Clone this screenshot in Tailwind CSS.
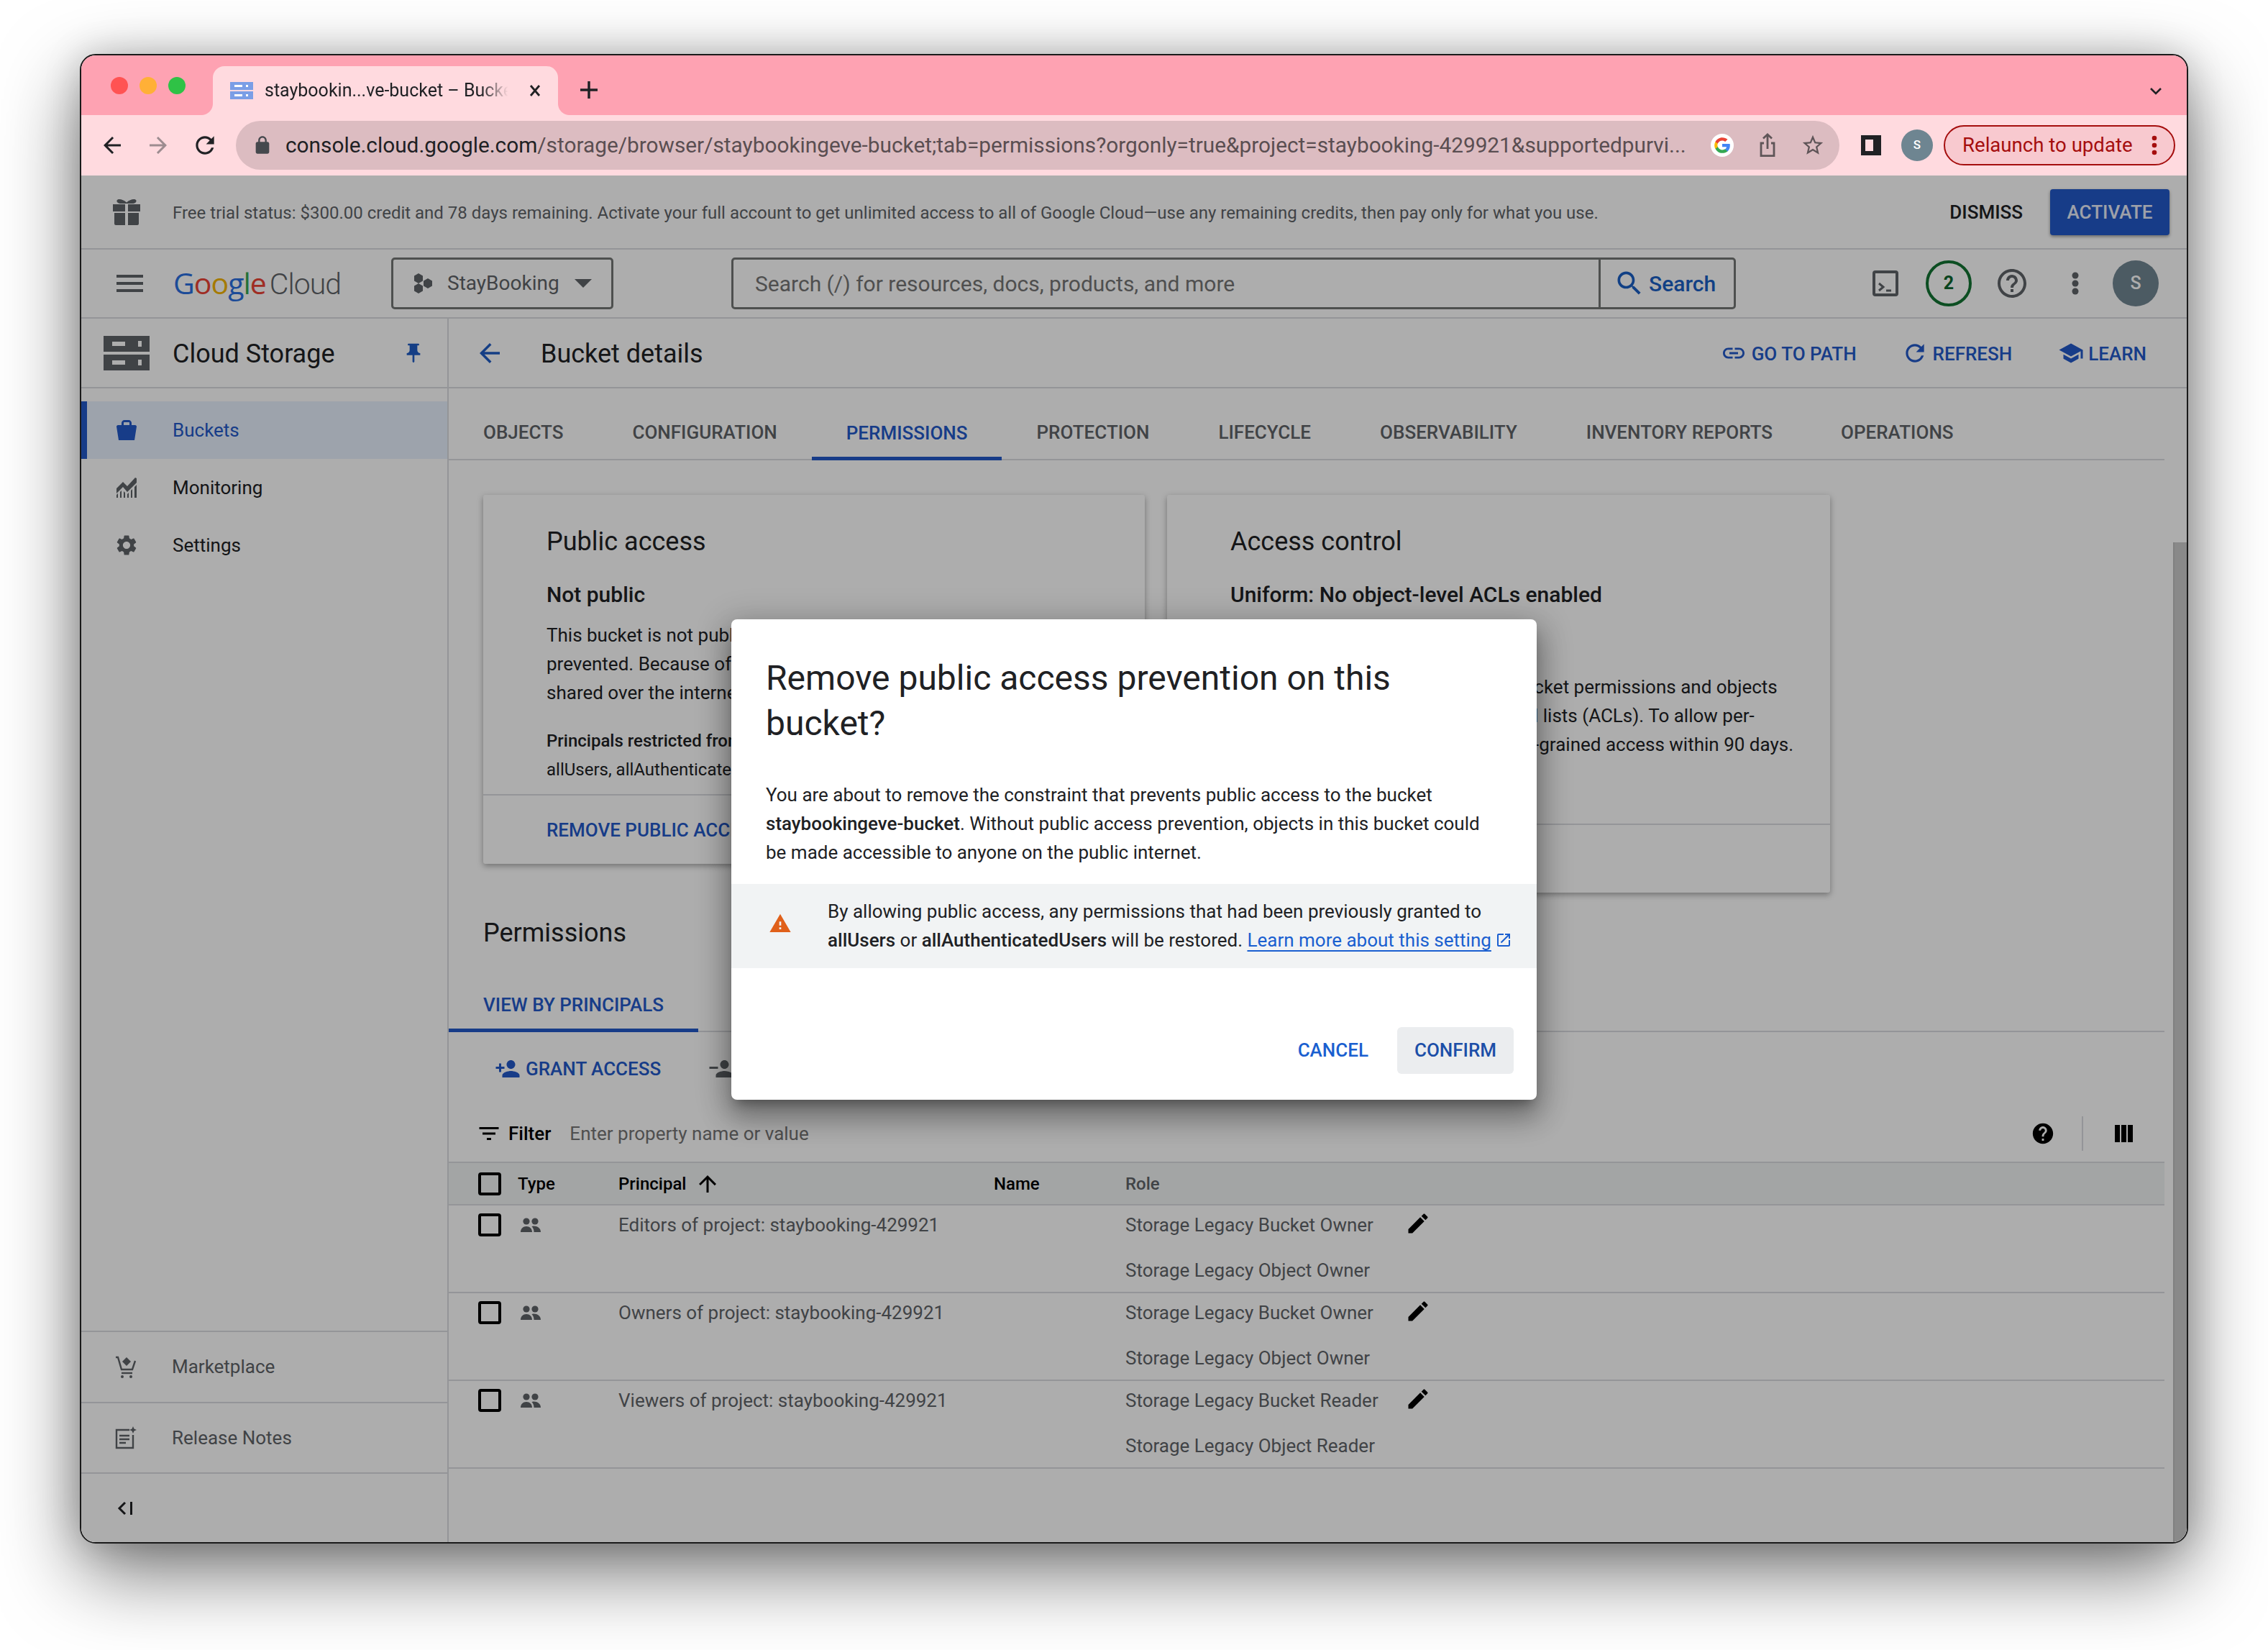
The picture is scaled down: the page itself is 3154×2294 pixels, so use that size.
<!doctype html>
<html lang="en">
<head>
<meta charset="UTF-8" />
<title>Bucket details</title>
<script src="https://cdn.jsdelivr.net/npm/@tailwindcss/browser@4"></script>
</head>
<body class="bg-white h-[2294px] w-[3154px] overflow-hidden pt-[75px] pl-[111px] font-['Roboto',sans-serif]">

<svg class="hidden">
  <symbol id="people" viewBox="0 0 28 20"><circle cx="8" cy="5" r="4.6"/><circle cx="20" cy="5" r="4.6"/><path d="M0 20c0-5 3.500-8 8-8s8 3 8 8zM18 11.500c5.500 0 10 3 10 8.500h-9.500c0-3-1-6-3-7.800.7-.4 1.500-.7 2.500-.7z"/></symbol>
  <symbol id="edit" viewBox="0 0 24 24"><path d="M3 17.25V21h3.75L17.81 9.94l-3.75-3.75L3 17.25zM20.71 7.04c.39-.39.39-1.02 0-1.41l-2.34-2.34c-.39-.39-1.02-.39-1.41 0l-1.83 1.83 3.75 3.75 1.83-1.83z"/></symbol>
</svg>

<!-- browser window -->
<div class="relative w-[2932px] h-[2071px] box-border border-2 border-[#1a1a1a] rounded-[22px] overflow-hidden bg-white flex flex-col shadow-[0_40px_110px_rgba(0,0,0,0.55),0_0_50px_rgba(0,0,0,0.18)]">

  <!-- tab strip -->
  <div class="h-[83px] shrink-0 bg-[#fea2b2] flex items-end">
    <div class="flex gap-4 ml-[41px] mb-[29px]">
      <div class="w-6 h-6 rounded-full bg-[#ff5353]"></div>
      <div class="w-6 h-6 rounded-full bg-[#ffb037]"></div>
      <div class="w-6 h-6 rounded-full bg-[#2fc246]"></div>
    </div>
    <div class="relative ml-[38px] w-[480px] h-[68px] bg-[#ffdadf] rounded-t-[16px] flex items-center pl-6">
      <div class="absolute -left-4 bottom-0 w-4 h-4 bg-[radial-gradient(circle_at_0_0,#fea2b2_15.5px,#ffdadf_16.5px)]"></div>
      <div class="absolute -right-4 bottom-0 w-4 h-4 bg-[radial-gradient(circle_at_100%_0,#fea2b2_15.5px,#ffdadf_16.5px)]"></div>
      <svg class="w-8 h-6 shrink-0" viewBox="0 0 32 24"><path fill="#7b9ee6" d="M0 0h32v11H0zM0 13h32v11H0z"/><path fill="#fff" d="M6 4h11v3H6zM22 4h3v3h-3zM6 17h11v3H6zM22 17h3v3h-3z"/></svg>
      <span class="ml-4 w-[342px] whitespace-nowrap overflow-hidden text-[25px] text-[#202124] [mask-image:linear-gradient(90deg,#000_88%,transparent_99%)]">staybookin...ve-bucket – Bucket details</span>
      <svg class="w-[24px] h-[24px] ml-[22px] shrink-0" viewBox="0 0 24 24" fill="none" stroke="#202124" stroke-width="2.8"><path d="M6 5l12 14M18 5L6 19"/></svg>
    </div>
    <svg class="w-8 h-8 ml-[27px] mb-[19px]" viewBox="0 0 24 24" fill="none" stroke="#202124" stroke-width="2.6"><path d="M12 3v18M3 12h18"/></svg>
    <svg class="w-6 h-6 ml-auto mr-[31px] mb-[22px]" viewBox="0 0 24 24" fill="none" stroke="#202124" stroke-width="2.6"><path d="M5 9l7 7 7-7"/></svg>
  </div>

  <!-- toolbar -->
  <div class="h-[84px] shrink-0 bg-[#ffdadf] flex items-center">
    <svg class="w-[36px] h-[36px] ml-[25px]" viewBox="0 0 24 24" fill="#202124"><path d="M20 11H7.83l5.59-5.59L12 4l-8 8 8 8 1.41-1.41L7.83 13H20v-2z"/></svg>
    <svg class="w-[36px] h-[36px] ml-[28px]" viewBox="0 0 24 24" fill="#9d8c90"><path d="M12 4l-1.41 1.41L16.17 11H4v2h12.17l-5.58 5.59L12 20l8-8z"/></svg>
    <svg class="w-[38px] h-[38px] ml-[28px]" viewBox="0 0 24 24" fill="#202124"><path d="M17.65 6.35C16.2 4.9 14.21 4 12 4c-4.42 0-7.99 3.58-7.99 8s3.57 8 7.99 8c3.73 0 6.84-2.55 7.73-6h-2.08c-.82 2.33-3.04 4-5.65 4-3.31 0-6-2.69-6-6s2.69-6 6-6c1.66 0 3.14.69 4.22 1.78L13 11h7V4l-2.35 2.35z"/></svg>
    <div class="ml-6 w-[2230px] h-[68px] rounded-full bg-[#dcbcc1] flex items-center shrink-0">
      <svg class="w-[28px] h-[28px] ml-[23px]" viewBox="0 0 24 24" fill="#45484d"><path d="M18 8h-1V6c0-2.76-2.24-5-5-5S7 3.24 7 6v2H6c-1.1 0-2 .9-2 2v10c0 1.1.9 2 2 2h12c1.1 0 2-.9 2-2V10c0-1.1-.9-2-2-2zM9 6c0-1.66 1.34-3 3-3s3 1.34 3 3v2H9V6z"/></svg>
      <span class="ml-[18px] w-[1960px] shrink-0 text-[29.8px] whitespace-nowrap overflow-hidden text-[#5a4e51]"><span class="text-[#202124]">console.cloud.google.com</span>/storage/browser/staybookingeve-bucket;tab=permissions?orgonly=true&amp;project=staybooking-429921&amp;supportedpurvi...</span>
      <div class="ml-[22px] w-8 h-8 rounded-full bg-white flex items-center justify-center shrink-0">
        <svg class="w-[26px] h-[26px]" viewBox="0 0 24 24"><path fill="#4285f4" d="M22 12.2c0-.7-.1-1.4-.2-2H12v3.9h5.6c-.3 1.3-1 2.4-2.1 3.1v2.6h3.4c2-1.8 3.100-4.500 3.100-7.600z"/><path fill="#34a853" d="M12 22c2.800 0 5.100-.9 6.900-2.500l-3.400-2.600c-.9.600-2.100 1-3.500 1-2.700 0-5-1.800-5.800-4.300H3.200v2.700C4.900 19.700 8.200 22 12 22z"/><path fill="#fbbc05" d="M6.200 13.600c-.2-.6-.3-1.200-.3-1.800s.1-1.200.3-1.800V7.300H3.200C2.400 8.700 2 10.300 2 12s.4 3.300 1.200 4.700l3-2.700z"/><path fill="#ea4335" d="M12 5.900c1.500 0 2.900.5 3.900 1.500l3-3C17.100 2.800 14.800 2 12 2 8.200 2 4.900 4.300 3.200 7.300l3 2.700C7 7.700 9.300 5.900 12 5.900z"/></svg>
      </div>
      <svg class="w-[28px] h-[36px] ml-[33px]" viewBox="0 0 14 18" fill="none" stroke="#5f5558" stroke-width="1.4"><path d="M4.500 7.500H2.500v8.800h9V7.500h-2M7 11.500V1.500M4 4.200l3-2.800 3 2.800"/></svg>
      <svg class="w-[34px] h-[34px] ml-[32px]" viewBox="0 0 24 24" fill="#5f5558"><path d="M22 9.240l-7.190-.62L12 2 9.190 8.630 2 9.240l5.460 4.730L5.820 21 12 17.270 18.180 21l-1.630-7.030L22 9.240zM12 15.400l-3.760 2.270 1-4.280-3.320-2.880 4.380-.38L12 6.100l1.710 4.040 4.380.38-3.320 2.880 1 4.280L12 15.400z"/></svg>
    </div>
    <div class="ml-[30px] w-[28px] h-[28px] border-[6px] border-[#202124] bg-[#ffdadf] box-border flex shrink-0"><div class="ml-auto w-[5px] bg-[#202124]"></div></div>
    <div class="ml-[28px] w-[44px] h-[44px] rounded-full bg-[#6e8591] text-white text-[17px] font-medium flex items-center justify-center shrink-0">S</div>
    <div class="ml-[15px] w-[322px] h-[56px] box-border rounded-full border-[2.5px] border-[#a50e0e] bg-[#f8c9cf] flex items-center pl-6 text-[27.6px] text-[#a50e0e] shrink-0">
      Relaunch to update
      <svg class="w-[8px] h-[28px] ml-auto mr-[23px]" viewBox="0 0 8 28" fill="#a50e0e"><circle cx="4" cy="4" r="3.3"/><circle cx="4" cy="14" r="3.3"/><circle cx="4" cy="24" r="3.3"/></svg>
    </div>
  </div>

  <!-- console -->
  <div class="relative flex-1 flex flex-col min-h-0 bg-white">

    <!-- trial banner -->
    <div class="h-[103px] shrink-0 border-b-2 border-[#dadce0] flex items-center">
      <svg class="w-[38px] h-[36px] ml-[44px]" viewBox="0 0 38 36" fill="#5f6368"><path d="M9 0c3 0 7 1.500 10 4.500C22 1.500 26 0 29 0c3 0 4.500 2 3 4-1 1.500-3 2-5 2H11C9 6 7 5.500 6 4 4.500 2 6 0 9 0zM0 7h17v10H0zM21 7h17v10H21zM2 19h15v17H4c-1 0-2-1-2-2zM21 19h15v15c0 1-1 2-2 2H21z"/></svg>
      <span class="ml-[45px] pt-[3px] text-[24px] text-[#5f6368] whitespace-nowrap">Free trial status: $300.00 credit and 78 days remaining. Activate your full account to get unlimited access to all of Google Cloud—use any remaining credits, then pay only for what you use.</span>
      <span class="ml-auto pt-[2px] text-[26px] font-medium text-[#202124]">DISMISS</span>
      <div class="ml-[38px] mr-6 w-[166px] h-[64px] rounded-[4px] bg-[#2359c9] text-white/90 text-[26px] font-medium flex items-center justify-center pt-[1px] shadow-[0_2px_4px_rgba(0,0,0,0.4)]">ACTIVATE</div>
    </div>

    <!-- top bar -->
    <div class="h-[96px] shrink-0 border-b-2 border-[#dadce0] flex items-center">
      <svg class="w-[37px] h-[24px] ml-[49px]" viewBox="0 0 37 24" fill="#5f6368"><path d="M0 0h37v4H0zM0 10h37v4H0zM0 20h37v4H0z"/></svg>
      <div class="ml-[42px] w-[234px] flex items-baseline text-[41px] leading-none whitespace-nowrap tracking-[-1px] font-['Open_Sans',sans-serif]">
        <span class="text-[#2a6fe0]">G</span><span class="text-[#ea4335]">o</span><span class="text-[#f4b400]">o</span><span class="text-[#2a6fe0]">g</span><span class="text-[#34a853]">l</span><span class="text-[#ea4335]">e</span><span class="ml-[5px] text-[#5f6368] font-['Roboto',sans-serif] font-light">Cloud</span>
      </div>
      <div class="ml-[69px] w-[309px] h-[72px] box-border rounded-[5px] border-[3px] border-[#747775] flex items-center shrink-0">
        <svg class="w-[28px] h-[30px] ml-[28px]" viewBox="0 0 28 30" fill="#5f6368"><path d="M7 1l6 3.500v7L7 15l-6-3.500v-7zM7 15l6 3.500v7L7 29l-6-3.500v-7zM20 8l6 3.500v7L20 22l-6-3.500v-7z"/></svg>
        <span class="ml-[19px] text-[28px] text-[#5f6368]">StayBooking</span>
        <svg class="w-6 h-3 ml-[21px]" viewBox="0 0 24 12" fill="#5f6368"><path d="M0 0h24L12 12z"/></svg>
      </div>
      <div class="ml-[164px] w-[1397px] h-[72px] box-border rounded-[5px] border-[3px] border-[#747775] flex items-center shrink-0">
        <span class="pl-[30px] flex-1 text-[30px] text-[#757575]">Search (/) for resources, docs, products, and more</span>
        <div class="h-full w-[188px] border-l-[3px] border-[#747775] flex items-center box-border">
          <svg class="w-[44px] h-[44px] ml-[18px]" viewBox="0 0 24 24" fill="#1a5fc4"><path d="M15.500 14h-.79l-.28-.27C15.410 12.590 16 11.110 16 9.500 16 5.910 13.090 3 9.500 3S3 5.910 3 9.500 5.910 16 9.500 16c1.610 0 3.090-.59 4.230-1.570l.27.28v.79l5 4.990L20.490 19l-4.990-5zm-6 0C7.010 14 5 11.990 5 9.500S7.010 5 9.500 5 14 7.010 14 9.500 11.990 14 9.500 14z"/></svg>
          <span class="ml-[5px] text-[30px] font-medium text-[#1a5fc4]">Search</span>
        </div>
      </div>
      <svg class="w-[36px] h-[36px] ml-[190px]" viewBox="0 0 36 36" fill="none" stroke="#5f6368" stroke-width="4"><rect x="2" y="2" width="32" height="32" rx="2"/><path d="M9 18l6 5-6 5" stroke-width="3"/><path d="M19 28h7" stroke-width="3"/></svg>
      <div class="ml-[38px] w-[64px] h-[64px] box-border rounded-full border-[4px] border-[#137333] flex items-center justify-center text-[25px] font-bold text-[#0d652d]">2</div>
      <svg class="w-[48px] h-[48px] ml-[32px]" viewBox="0 0 24 24" fill="#5f6368"><path d="M11 18h2v-2h-2v2zm1-16C6.480 2 2 6.480 2 12s4.480 10 10 10 10-4.480 10-10S17.520 2 12 2zm0 18c-4.410 0-8-3.590-8-8s3.590-8 8-8 8 3.590 8 8-3.590 8-8 8zm0-14c-2.210 0-4 1.790-4 4h2c0-1.100.9-2 2-2s2 .9 2 2c0 2-3 1.750-3 5h2c0-2.250 3-2.500 3-5 0-2.210-1.790-4-4-4z"/></svg>
      <svg class="w-[10px] h-[32px] ml-[59px]" viewBox="0 0 10 32" fill="#5f6368"><circle cx="5" cy="5" r="4.5"/><circle cx="5" cy="16" r="4.5"/><circle cx="5" cy="27" r="4.5"/></svg>
      <div class="ml-[47px] w-[64px] h-[64px] rounded-full bg-[#718692] text-white text-[25px] font-medium flex items-center justify-center">S</div>
    </div>

    <div class="flex-1 flex min-h-0">

      <!-- sidebar -->
      <div class="w-[511px] shrink-0 border-r-2 border-[#dadce0] flex flex-col">
        <div class="h-[97px] shrink-0 border-b-2 border-[#dadce0] flex items-center">
          <svg class="w-[64px] h-[48px] ml-[31px]" viewBox="0 0 64 48" fill="#5f6368"><path fill-rule="evenodd" d="M0 0h64v22H0zM12 8v6h18V8zM48 7h5v8h-5zM0 26h64v22H0zM12 34v6h18v-6zM48 33h5v8h-5z"/></svg>
          <span class="ml-[32px] pt-[2px] text-[36px] text-[#202124]">Cloud Storage</span>
          <svg class="w-[32px] h-[36px] ml-[93px]" viewBox="0 0 24 24" fill="#1f5cc4"><path d="M16 9V4h1c.55 0 1-.45 1-1s-.45-1-1-1H7c-.55 0-1 .45-1 1s.45 1 1 1h1v5c0 1.660-1.340 3-3 3v2h5.970v7l1 1 1-1v-7H19v-2c-1.660 0-3-1.340-3-3z"/></svg>
        </div>
        <div class="mt-[18px] h-[80px] flex items-center bg-[#e8f0fe] border-l-[8px] border-[#2359c9] text-[26px] text-[#2359c9]">
          <svg class="w-[28px] h-[28px] ml-[41px]" viewBox="0 0 28 28" fill="#2359c9"><path d="M7 7V4c0-2 2-4 4-4h6c2 0 4 2 4 4v3h5c1 0 2 1 2 2l-3 19H3L0 9c0-1 1-2 2-2zM10 7h8V4c0-.6-.4-1-1-1h-6c-.6 0-1 .4-1 1z"/></svg>
          <span class="ml-[50px]">Buckets</span>
        </div>
        <div class="h-[80px] flex items-center text-[26px] text-[#202124]">
          <svg class="w-[28px] h-[28px] ml-[49px]" viewBox="0 0 28 28" fill="#5f6368"><path d="M0 15l9-9 6 6L26 0l2 1v6L15 20 9 13l-9 9zM0 24l2-2v6H0zM5 20l2-2v10H5zM10 19l2 2v7h-2zM15 23l2-2v7h-2zM20 18l2-2v12h-2zM25 13l3-3v18h-3z"/></svg>
          <span class="ml-[50px]">Monitoring</span>
        </div>
        <div class="h-[80px] flex items-center text-[26px] text-[#202124]">
          <svg class="w-[34px] h-[34px] ml-[46px]" viewBox="0 0 24 24" fill="#5f6368"><path d="M19.140 12.940c.04-.3.06-.61.06-.94 0-.32-.02-.64-.07-.94l2.030-1.580c.18-.14.23-.41.12-.61l-1.920-3.320c-.12-.22-.37-.29-.59-.22l-2.390.96c-.5-.38-1.030-.7-1.620-.94l-.36-2.540c-.04-.24-.24-.41-.48-.41h-3.840c-.24 0-.43.17-.47.41l-.36 2.540c-.59.24-1.130.57-1.620.94l-2.390-.96c-.22-.08-.47 0-.59.22L2.740 8.870c-.12.21-.08.47.12.61l2.030 1.580c-.05.3-.09.63-.09.94s.02.64.07.94l-2.030 1.580c-.18.14-.23.41-.12.61l1.920 3.320c.12.22.37.29.59.22l2.390-.96c.5.38 1.030.7 1.620.94l.36 2.540c.05.24.24.41.48.41h3.840c.24 0 .44-.17.47-.41l.36-2.540c.59-.24 1.130-.56 1.620-.94l2.390.96c.22.08.47 0 .59-.22l1.920-3.320c.12-.22.07-.47-.12-.61l-2.010-1.580zM12 15.600c-1.980 0-3.600-1.620-3.600-3.600s1.620-3.600 3.600-3.600 3.600 1.620 3.600 3.600-1.620 3.600-3.600 3.600z"/></svg>
          <span class="ml-[47px]">Settings</span>
        </div>
        <div class="mt-auto border-t-2 border-[#dadce0] h-[99px] flex items-center text-[26px] text-[#5f6368]">
          <svg class="w-[30px] h-[32px] ml-[47px]" viewBox="0 0 30 32" fill="none" stroke="#5f6368" stroke-width="2.4"><path d="M1 2h3l5 17h15l4-12"/><path d="M9 24h15"/><circle cx="10" cy="29" r="2" fill="#5f6368" stroke="none"/><circle cx="22" cy="29" r="2" fill="#5f6368" stroke="none"/><path d="M16 2l6 6-6 6-6-6z" fill="#5f6368" stroke="none"/></svg>
          <span class="ml-[49px]">Marketplace</span>
        </div>
        <div class="border-t-2 border-[#dadce0] h-[98px] flex items-center text-[26px] text-[#5f6368]">
          <svg class="w-[30px] h-[32px] ml-[47px]" viewBox="0 0 30 32" fill="none" stroke="#5f6368" stroke-width="2.4"><path d="M20 5H2v25h23V12"/><path d="M6 13h14M6 18h14M6 23h9" stroke-width="2.6"/><path d="M25 0l1.500 3.500L30 5l-3.500 1.500L25 10l-1.500-3.500L20 5l3.500-1.500z" fill="#5f6368" stroke="none"/></svg>
          <span class="ml-[49px]">Release Notes</span>
        </div>
        <div class="border-t-2 border-[#dadce0] h-[97px] shrink-0 flex items-center">
          <svg class="w-[22px] h-[22px] ml-[50px]" viewBox="0 0 22 22" fill="none" stroke="#202124" stroke-width="3"><path d="M11 3l-8 8 8 8M19.500 2v18"/></svg>
        </div>
      </div>

      <!-- main -->
      <div class="flex-1 min-w-0 flex flex-col">
        <div class="h-[97px] shrink-0 border-b-2 border-[#dadce0] flex items-center">
          <svg class="w-[42px] h-[42px] ml-[36px]" viewBox="0 0 24 24" fill="#1f5cc4"><path d="M20 11H7.830l5.590-5.590L12 4l-8 8 8 8 1.410-1.410L7.830 13H20v-2z"/></svg>
          <span class="ml-[50px] pt-[2px] text-[36px] text-[#202124]">Bucket details</span>
          <svg class="w-[36px] h-[36px] ml-auto" viewBox="0 0 24 24" fill="#2359c9"><path d="M3.900 12c0-1.710 1.390-3.100 3.100-3.100h4V7H7c-2.760 0-5 2.240-5 5s2.240 5 5 5h4v-1.900H7c-1.710 0-3.100-1.390-3.100-3.100zM8 13h8v-2H8v2zm9-6h-4v1.900h4c1.710 0 3.100 1.390 3.100 3.100s-1.390 3.100-3.100 3.100h-4V17h4c2.760 0 5-2.240 5-5s-2.240-5-5-5z"/></svg>
          <span class="ml-[7px] pt-[4px] text-[26px] font-medium text-[#2359c9]">GO TO PATH</span>
          <svg class="w-[38px] h-[38px] ml-[62px]" viewBox="0 0 24 24" fill="#2359c9"><path d="M17.650 6.350C16.200 4.900 14.210 4 12 4c-4.420 0-7.990 3.580-7.990 8s3.570 8 7.990 8c3.730 0 6.840-2.550 7.730-6h-2.080c-.82 2.330-3.040 4-5.650 4-3.310 0-6-2.690-6-6s2.690-6 6-6c1.660 0 3.140.69 4.220 1.780L13 11h7V4l-2.350 2.350z"/></svg>
          <span class="ml-[6px] pt-[4px] text-[26px] font-medium text-[#2359c9]">REFRESH</span>
          <svg class="w-[36px] h-[36px] ml-[64px]" viewBox="0 0 24 24" fill="#2359c9"><path d="M5 13.180v4L12 21l7-3.820v-4L12 17l-7-3.820zM12 3L1 9l11 6 9-4.910V17h2V9L12 3z"/></svg>
          <span class="ml-[6px] pt-[4px] mr-[56px] text-[26px] font-medium text-[#2359c9]">LEARN</span>
        </div>

        <div class="flex-1 flex min-h-0">
          <div class="w-[2386px] shrink-0 flex flex-col">
            <!-- tabs -->
            <div class="h-[100px] shrink-0 border-b-2 border-[#dadce0] flex text-[26px] font-medium text-[#5f6368]">
              <div class="px-[48px] flex items-center pt-[25px]">OBJECTS</div>
              <div class="px-[48px] flex items-center pt-[25px]">CONFIGURATION</div>
              <div class="px-[48px] flex items-center pt-[30px] text-[#2359c9] border-b-[5px] border-[#2359c9] -mb-[2px]">PERMISSIONS</div>
              <div class="px-[48px] flex items-center pt-[25px]">PROTECTION</div>
              <div class="px-[48px] flex items-center pt-[25px]">LIFECYCLE</div>
              <div class="px-[48px] flex items-center pt-[25px]">OBSERVABILITY</div>
              <div class="px-[48px] flex items-center pt-[25px]">INVENTORY REPORTS</div>
              <div class="px-[47px] flex items-center pt-[25px]">OPERATIONS</div>
            </div>

            <!-- cards -->
            <div class="h-[601px] shrink-0 pt-[48px] pl-[48px] flex gap-[31px] items-start text-[26px] leading-[40px] text-[#202124]">
              <div class="w-[920px] h-[513px] bg-white rounded-[3px] shadow-[0_3px_8px_rgba(0,0,0,0.35)] flex flex-col">
                <div class="px-[88px] pt-[41px] flex-1">
                  <h3 class="text-[36px] leading-[48px]">Public access</h3>
                  <div class="mt-[30px] text-[30px] font-medium">Not public</div>
                  <p class="mt-[16px] whitespace-nowrap">This bucket is not publicly accessible and public access is<br>prevented. Because of this, objects can't be<br>shared over the internet.</p>
                  <p class="mt-[27px] font-medium text-[24px]">Principals restricted from access</p>
                  <p class="text-[24px]">allUsers, allAuthenticatedUsers</p>
                </div>
                <div class="h-[97px] border-t-2 border-[#dadce0] px-[88px] flex items-center font-medium text-[#2359c9]">REMOVE PUBLIC ACCESS PREVENTION</div>
              </div>
              <div class="w-[922px] h-[553px] bg-white rounded-[3px] shadow-[0_3px_8px_rgba(0,0,0,0.35)] flex flex-col">
                <div class="px-[88px] pt-[41px] flex-1">
                  <h3 class="text-[36px] leading-[48px]">Access control</h3>
                  <div class="mt-[30px] text-[30px] font-medium">Uniform: No object-level ACLs enabled</div>
                  <p class="mt-[88px] whitespace-nowrap">Access is controlled strictly using bucket permissions and objects<br>can't have object-level access control lists (ACLs). To allow per-<br>object access, you can switch to fine-grained access within 90 days.</p>
                </div>
                <div class="h-[96px] border-t-2 border-[#dadce0]"></div>
              </div>
            </div>

            <div class="shrink-0 pl-[48px] pt-[32px] h-[80px] text-[36px] leading-[48px] text-[#202124]">Permissions</div>

            <!-- view tabs -->
            <div class="h-[114px] shrink-0 border-b-2 border-[#dadce0] flex items-end">
              <div class="w-[347px] h-[76px] box-border border-b-[5px] -mb-[2px] border-[#2359c9] pl-[48px] pt-[18px] text-[26px] font-medium text-[#2359c9] leading-[40px]">VIEW BY PRINCIPALS</div>
            </div>

            <!-- actions -->
            <div class="h-[102px] shrink-0 flex items-center text-[26px] font-medium">
              <svg class="w-[36px] h-[36px] ml-[64px]" viewBox="0 0 24 24" fill="#2359c9"><path d="M15 12c2.210 0 4-1.790 4-4s-1.790-4-4-4-4 1.790-4 4 1.790 4 4 4zm-9-2V7H4v3H1v2h3v3h2v-3h3v-2H6zm9 4c-2.670 0-8 1.340-8 4v2h16v-2c0-2.660-5.330-4-8-4z"/></svg>
              <span class="ml-[7px] text-[#2359c9]">GRANT ACCESS</span>
              <svg class="w-[36px] h-[36px] ml-[66px]" viewBox="0 0 24 24" fill="#5f6368"><path d="M15 12c2.210 0 4-1.790 4-4s-1.790-4-4-4-4 1.790-4 4 1.790 4 4 4zM1 10v2h8v-2zm14 4c-2.670 0-8 1.340-8 4v2h16v-2c0-2.660-5.330-4-8-4z"/></svg>
              <span class="ml-[7px] text-[#5f6368]">REMOVE ACCESS</span>
            </div>

            <!-- filter -->
            <div class="h-[78px] shrink-0 flex items-center text-[26px]">
              <svg class="w-[36px] h-[36px] ml-[38px]" viewBox="0 0 24 24" fill="#000"><path d="M10 18h4v-2h-4v2zM3 6v2h18V6H3zm3 7h12v-2H6v2z"/></svg>
              <span class="ml-[9px] font-medium text-black">Filter</span>
              <span class="ml-[26px] text-[#757575]">Enter property name or value</span>
              <svg class="w-[34px] h-[34px] ml-auto" viewBox="0 0 24 24" fill="#000"><path d="M12 2C6.480 2 2 6.480 2 12s4.480 10 10 10 10-4.480 10-10S17.520 2 12 2zm1 17h-2v-2h2v2zm2.070-7.750l-.9.92C13.450 12.900 13 13.500 13 15h-2v-.5c0-1.100.45-2.100 1.170-2.830l1.240-1.260c.37-.36.59-.86.59-1.410 0-1.100-.9-2-2-2s-2 .9-2 2H8c0-2.210 1.790-4 4-4s4 1.790 4 4c0 .88-.36 1.680-.93 2.250z"/></svg>
              <div class="ml-[37px] w-[2px] h-[48px] bg-[#dadce0]"></div>
              <svg class="w-[26px] h-[24px] ml-[44px] mr-[43px]" viewBox="0 0 26 24" fill="#000"><path d="M0 0h7v24H0zM9 0h7v24H9zM18 0h7v24h-7z"/></svg>
            </div>

            <!-- table header -->
            <div class="h-[61px] shrink-0 border-y-2 border-[#dadce0] bg-[#f1f3f4] grid grid-cols-[96px_140px_522px_183px_1fr] items-center text-[24px] font-medium text-black">
              <div class="w-[32px] h-[32px] ml-[41px] border-[4px] border-black rounded-[4px] box-border"></div>
              <div>Type</div>
              <div class="flex items-center">Principal<svg class="w-[36px] h-[36px] ml-[12px]" viewBox="0 0 24 24" fill="#000"><path d="M4 12l1.410 1.410L11 7.830V20h2V7.830l5.580 5.590L20 12l-8-8-8 8z"/></svg></div>
              <div>Name</div>
              <div class="text-[#5f6368]">Role</div>
            </div>

            <!-- rows -->
            <div class="h-[122px] shrink-0 border-b-2 border-[#dadce0] grid grid-cols-[96px_140px_522px_183px_1fr] text-[26px] leading-[40px] text-[#5f6368] pt-[11px]">
              <div class="w-[32px] h-[32px] ml-[41px] border-[4px] border-black rounded-[4px] box-border"></div>
              <svg class="w-[28px] h-[20px] ml-[4px] mt-[6px]" fill="#5f6368"><use href="#people"/></svg>
              <div class="-mt-[4px]">Editors of project: staybooking-429921</div>
              <div></div>
              <div class="-mt-[4px] flex flex-col gap-[23px]">
                <div class="flex"><span class="w-[389px]">Storage Legacy Bucket Owner</span><svg class="w-[36px] h-[36px]" fill="#000"><use href="#edit"/></svg></div>
                <div>Storage Legacy Object Owner</div>
              </div>
            </div>
            <div class="h-[122px] shrink-0 border-b-2 border-[#dadce0] grid grid-cols-[96px_140px_522px_183px_1fr] text-[26px] leading-[40px] text-[#5f6368] pt-[11px]">
              <div class="w-[32px] h-[32px] ml-[41px] border-[4px] border-black rounded-[4px] box-border"></div>
              <svg class="w-[28px] h-[20px] ml-[4px] mt-[6px]" fill="#5f6368"><use href="#people"/></svg>
              <div class="-mt-[4px]">Owners of project: staybooking-429921</div>
              <div></div>
              <div class="-mt-[4px] flex flex-col gap-[23px]">
                <div class="flex"><span class="w-[389px]">Storage Legacy Bucket Owner</span><svg class="w-[36px] h-[36px]" fill="#000"><use href="#edit"/></svg></div>
                <div>Storage Legacy Object Owner</div>
              </div>
            </div>
            <div class="h-[122px] shrink-0 border-b-2 border-[#dadce0] grid grid-cols-[96px_140px_522px_183px_1fr] text-[26px] leading-[40px] text-[#5f6368] pt-[11px]">
              <div class="w-[32px] h-[32px] ml-[41px] border-[4px] border-black rounded-[4px] box-border"></div>
              <svg class="w-[28px] h-[20px] ml-[4px] mt-[6px]" fill="#5f6368"><use href="#people"/></svg>
              <div class="-mt-[4px]">Viewers of project: staybooking-429921</div>
              <div></div>
              <div class="-mt-[4px] flex flex-col gap-[23px]">
                <div class="flex"><span class="w-[389px]">Storage Legacy Bucket Reader</span><svg class="w-[36px] h-[36px]" fill="#000"><use href="#edit"/></svg></div>
                <div>Storage Legacy Object Reader</div>
              </div>
            </div>
          </div>

          <!-- scrollbar -->
          <div class="ml-[12px] w-[19px] shrink-0 pt-[214px] flex flex-col">
            <div class="flex-1 bg-[#cbcbcb] border-l-2 border-[#bdbdbd]"></div>
          </div>
        </div>
      </div>
    </div>

    <!-- scrim + dialog -->
    <div class="absolute inset-0 bg-black/32 flex items-center justify-center">
      <div class="w-[1120px] h-[668px] mt-[1px] bg-white rounded-[8px] flex flex-col shadow-[0_24px_38px_3px_rgba(0,0,0,0.25),0_9px_46px_8px_rgba(0,0,0,0.2),0_11px_15px_-7px_rgba(0,0,0,0.3)]">
        <h2 class="pl-[48px] pr-[120px] pt-[50px] text-[48px] leading-[63px] text-[#202124]">Remove public access prevention on this bucket?</h2>
        <p class="mt-[48px] pl-[48px] pr-[60px] text-[26px] leading-[40px] text-[#202124]">You are about to remove the constraint that prevents public access to the bucket <b class="font-medium">staybookingeve-bucket</b>. Without public access prevention, objects in this bucket could be made accessible to anyone on the public internet.</p>
        <div class="mt-[24px] h-[117px] bg-[#f1f3f4] flex items-center shrink-0">
          <svg class="w-[32px] h-[32px] ml-[52px] -mt-[6px] shrink-0" viewBox="0 0 24 24" fill="#e0601a"><path d="M1 21h22L12 2 1 21zm12-3h-2v-2h2v2zm0-4h-2v-4h2v4z"/></svg>
          <p class="ml-[50px] text-[26px] leading-[40px] text-[#202124] whitespace-nowrap">By allowing public access, any permissions that had been previously granted to<br><b class="font-medium">allUsers</b> or <b class="font-medium">allAuthenticatedUsers</b> will be restored. <span class="text-[#1a5fd0] underline underline-offset-[5px]">Learn more about this setting</span><svg class="inline w-[24px] h-[24px] ml-[5px] -mt-[4px]" viewBox="0 0 24 24" fill="#1a5fd0"><path d="M19 19H5V5h7V3H5c-1.110 0-2 .9-2 2v14c0 1.100.89 2 2 2h14c1.100 0 2-.9 2-2v-7h-2v7zM14 3v2h3.590l-9.830 9.830 1.410 1.410L19 6.410V10h2V3h-7z"/></svg></p>
        </div>
        <div class="mt-auto mb-[36px] mr-[32px] flex items-center justify-end text-[26px] font-medium">
          <span class="text-[#1a5fd0]">CANCEL</span>
          <div class="ml-[40px] w-[162px] h-[65px] rounded-[6px] bg-[#ebedef] flex items-center justify-center text-[#1c4fa8]">CONFIRM</div>
        </div>
      </div>
    </div>
  </div>
</div>
</body>
</html>
